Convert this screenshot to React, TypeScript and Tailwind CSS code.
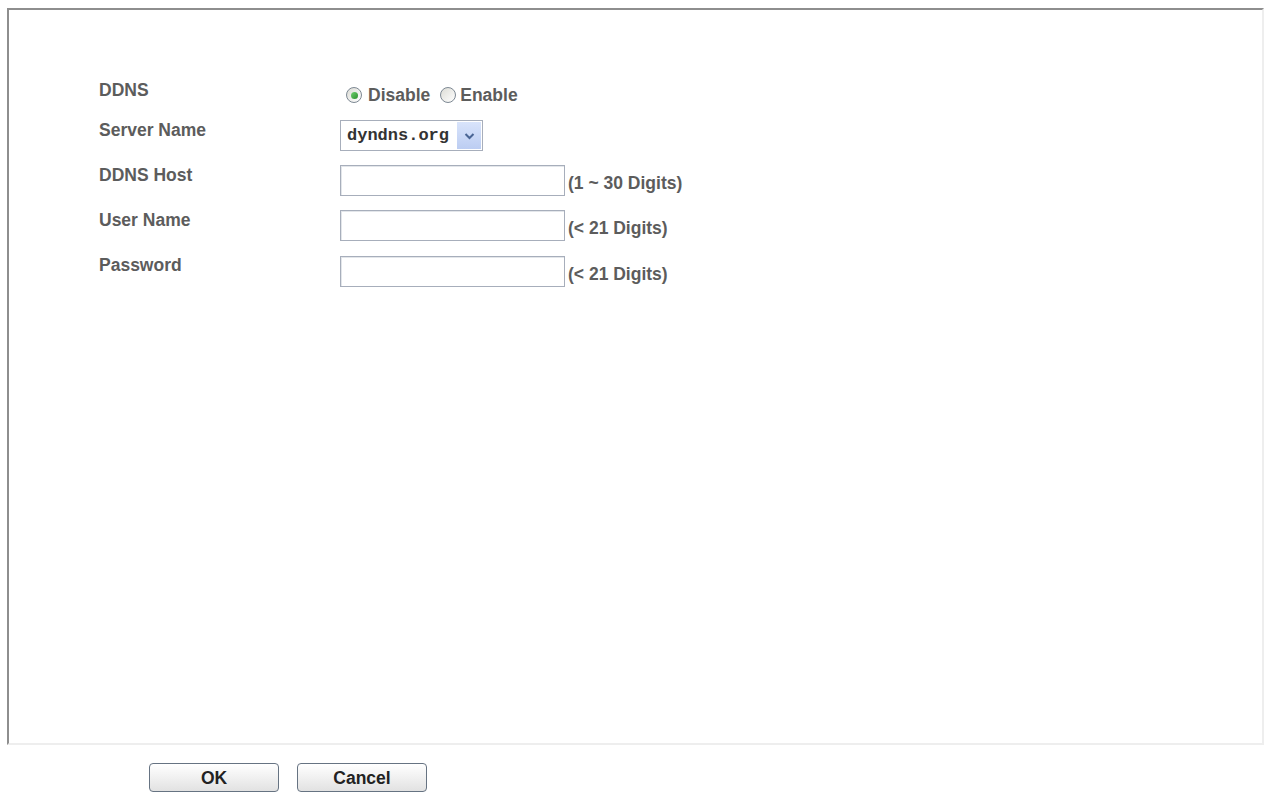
import React from "react";

const font = { fontFamily: '"Liberation Sans", Arial, sans-serif' };

function Radio({ checked }: { checked?: boolean }) {
  return (
    <span className="flex h-[16px] w-[16px] items-center justify-center rounded-full border border-[#7d8893] bg-gradient-to-br from-[#dcdcd6] to-[#ffffff]">
      {checked && (
        <span className="h-[7px] w-[7px] rounded-full bg-gradient-to-br from-[#6fd06f] to-[#2a8f2a]" />
      )}
    </span>
  );
}

function TextInput() {
  return (
    <div className="h-[31px] w-[225px] border border-[#a7aebb] bg-white shadow-[inset_1px_1px_0_#e3e6ea]" />
  );
}

function Row({
  label,
  top,
  height,
  children,
}: {
  label: string;
  top: number;
  height: string;
  children: React.ReactNode;
}) {
  return (
    <div className={`flex ${height}`}>
      <div
        className="w-[241px] shrink-0 text-[17.5px] font-bold leading-[20px] text-[#5c5c5c]"
        style={{ marginTop: top }}
      >
        {label}
      </div>
      <div className="flex items-start">{children}</div>
    </div>
  );
}

export default function App() {
  return (
    <div className="h-[798px] w-[1267px] bg-white" style={font}>
      <div className="pl-[7px] pt-[8px]">
        <div className="h-[737px] w-[1257px] border-b-2 border-l-2 border-r-2 border-t-2 border-b-[#eeeeee] border-l-[#8e8e8e] border-r-[#eeeeee] border-t-[#8e8e8e] pl-[90px] pt-[70px]">
          <Row label="DDNS" top={0} height="h-[40px]">
            <div className="mt-[5px] flex h-[20px] items-center text-[17.5px] font-bold leading-[20px] text-[#5c5c5c]">
              <span className="ml-[6px]">
                <Radio checked />
              </span>
              <span className="ml-[6px]">Disable</span>
              <span className="ml-[10px]">
                <Radio />
              </span>
              <span className="ml-[4px]">Enable</span>
            </div>
          </Row>
          <Row label="Server Name" top={0} height="h-[45px]">
            <div className="flex h-[31px] w-[143px] items-center border border-[#a7aebb] bg-white pl-[6px] pr-[1px]">
              <span
                className="flex-1 text-[17px] font-bold leading-[20px] text-[#333]"
                style={{ fontFamily: '"Liberation Mono", "Courier New", monospace' }}
              >
                dyndns.org
              </span>
              <span className="flex h-[27px] w-[24px] items-center justify-center bg-gradient-to-b from-[#d9e4fb] to-[#bccdf2]">
                <svg width="11" height="8" viewBox="0 0 11 8">
                  <path d="M1.5 2 L5.5 6 L9.5 2" fill="none" stroke="#4a6594" strokeWidth="2" />
                </svg>
              </span>
            </div>
          </Row>
          <Row label="DDNS Host" top={0} height="h-[45px]">
            <TextInput />
            <span className="ml-[3px] mt-[8px] text-[17.5px] font-bold leading-[20px] text-[#5c5c5c]">
              (1 ~ 30 Digits)
            </span>
          </Row>
          <Row label="User Name" top={0} height="h-[46px]">
            <TextInput />
            <span className="ml-[3px] mt-[8px] text-[17.5px] font-bold leading-[20px] text-[#5c5c5c]">
              (&lt; 21 Digits)
            </span>
          </Row>
          <Row label="Password" top={-1} height="h-[40px]">
            <TextInput />
            <span className="ml-[3px] mt-[8px] text-[17.5px] font-bold leading-[20px] text-[#5c5c5c]">
              (&lt; 21 Digits)
            </span>
          </Row>
        </div>
        <div className="mt-[18px] flex gap-[18px] pl-[142px]">
          <button className="h-[29px] w-[130px] rounded-[4px] border border-[#667382] bg-gradient-to-b from-[#ffffff] to-[#e2e2e2] text-[17.5px] font-bold leading-[20px] text-[#222]">
            OK
          </button>
          <button className="h-[29px] w-[130px] rounded-[4px] border border-[#667382] bg-gradient-to-b from-[#ffffff] to-[#e2e2e2] text-[17.5px] font-bold leading-[20px] text-[#222]">
            Cancel
          </button>
        </div>
      </div>
    </div>
  );
}
